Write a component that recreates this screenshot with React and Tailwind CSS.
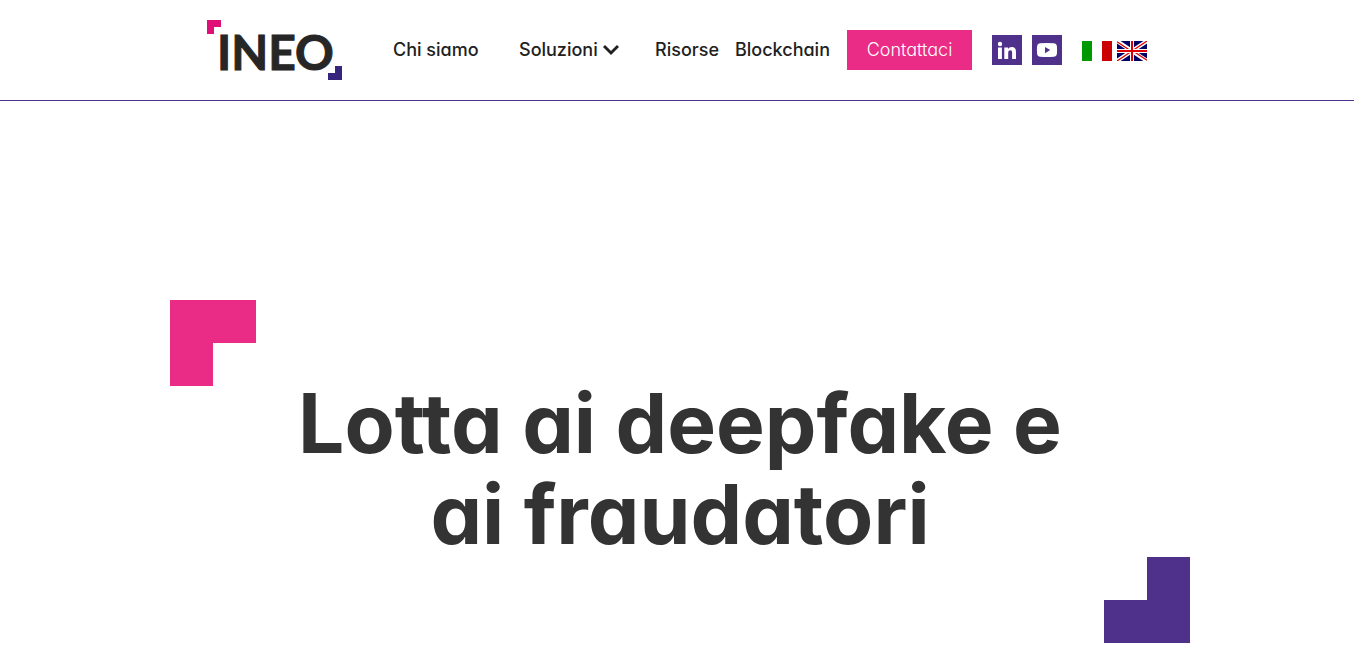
import React from "react";

const navCls = "block text-lg leading-6 font-medium text-[#212121] hover:text-[#4f318b] whitespace-nowrap";

function Logo() {
  return (
    <a href="#home" aria-label="INEO" className="block w-[135px] shrink-0">
      <svg viewBox="0 0 135 60" className="block w-full">
        <path d="M0 0h14v7H7v7H0z" fill="#df0f77" />
        <text x="10" y="50" fontSize="48" fontWeight="700" fill="#262626" stroke="#262626" strokeWidth="1"
          fontFamily="Lato, 'Liberation Sans', sans-serif">INEO</text>
        <path d="M135 60h-14v-7h7v-7h7z" fill="#35257d" />
      </svg>
    </a>
  );
}

function LinkedIn() {
  return (
    <svg viewBox="0 0 30 30" className="block size-[30px] bg-[#4f318b]" fill="#fff">
      <circle cx="8" cy="9" r="2.2" />
      <path d="M6 12.4h3.9V24H6zM12.3 12.4H16V14c.7-1.1 2-1.9 3.8-1.9 3.2 0 4.2 2.1 4.2 5.1V24h-3.9v-6.1c0-1.6-.4-2.7-1.8-2.7-1.5 0-2.1 1.1-2.1 2.7V24h-3.9z" />
    </svg>
  );
}

function YouTube() {
  return (
    <svg viewBox="0 0 30 30" className="block size-[30px] bg-[#4f318b]">
      <path d="M8 8.2q7-.6 14 0 2.6.2 2.9 2.8.4 4 0 8-.3 2.6-2.9 2.8-7 .6-14 0-2.6-.2-2.9-2.8-.4-4 0-8 .3-2.6 2.9-2.8z" fill="#fff" />
      <path d="M13 12v6.2l5.2-3.1z" fill="#4f318b" />
    </svg>
  );
}

function FlagIt() {
  return (
    <svg viewBox="0 0 30 20" className="block h-5 w-[30px]">
      <path d="M0 0h10v20H0z" fill="#090" />
      <path d="M10 0h10v20H10z" fill="#fff" />
      <path d="M20 0h10v20H20z" fill="#c00" />
    </svg>
  );
}

function FlagUk() {
  return (
    <svg viewBox="0 0 30 20" className="block h-5 w-[30px]">
      <path d="M0 0h30v20H0z" fill="#006" />
      <path d="M0 0l30 20M30 0L0 20" stroke="#fff" strokeWidth="4" />
      <path d="M0 .7L14 10M30 0L15 10M30 19.3L16 10M0 20l15-10" stroke="#d00" strokeWidth="1.3" />
      <path d="M15 0v20M0 10h30" stroke="#fff" strokeWidth="4" />
      <path d="M15 0v20M0 10h30" stroke="#d00" strokeWidth="2" />
    </svg>
  );
}

function Header() {
  return (
    <header className="border-b border-[#4f318b]">
      <div className="mx-auto flex h-[100px] max-w-[940px] items-center">
        <Logo />
        <nav className="ml-[51px] flex items-center">
          <a href="#chi-siamo" className={`${navCls} w-[126px]`}>Chi siamo</a>
          <button type="button" className={`${navCls} w-[136px] cursor-pointer`}>
            <span className="flex items-center gap-1">
              <span className="w-20 text-left">Soluzioni</span>
              <svg viewBox="0 0 16 12" className="w-4" fill="none" stroke="currentColor" strokeWidth="3">
                <path d="M1 2l7 7 7-7" />
              </svg>
            </span>
          </button>
          <a href="#risorse" className={`${navCls} w-20`}>Risorse</a>
          <a href="#blockchain" className={`${navCls} w-28`}>Blockchain</a>
          <a href="#contattaci" className="block w-[125px] bg-[#ea2c87] py-2 text-center text-lg leading-6 font-light text-white">
            Contattaci
          </a>
        </nav>
        <div className="ml-5 flex gap-2.5">
          <a href="#linkedin" aria-label="LinkedIn"><LinkedIn /></a>
          <a href="#youtube" aria-label="YouTube"><YouTube /></a>
        </div>
        <div className="mt-0.5 ml-5 flex gap-[5px]">
          <a href="#it" aria-label="Italiano"><FlagIt /></a>
          <a href="#en" aria-label="English"><FlagUk /></a>
        </div>
      </div>
    </header>
  );
}

function Hero() {
  return (
    <section className="pt-[199px] pb-2 pl-1.5">
      <div className="mx-auto flex max-w-[1020px] flex-col">
        <svg viewBox="0 0 86 86" className="size-[86px] self-start">
          <path d="M0 0h86v43H43v43H0z" fill="#ea2c87" />
        </svg>
        <h1 className="mx-auto -mt-2 max-w-[820px] text-center text-[82px] leading-[91px] font-bold text-[#333] [font-optical-sizing:none]">
          Lotta ai deepfake e ai fraudatori
        </h1>
        <svg viewBox="0 0 86 86" className="-mt-[3px] size-[86px] self-end">
          <path d="M86 86H0V43h43V0h43z" fill="#4f318b" />
        </svg>
      </div>
    </section>
  );
}

export default function App() {
  return (
    <div className="bg-white pr-3 font-[Inter,'Liberation_Sans',sans-serif] [font-feature-settings:'cv11']">
      <Header />
      <main>
        <Hero />
      </main>
    </div>
  );
}
